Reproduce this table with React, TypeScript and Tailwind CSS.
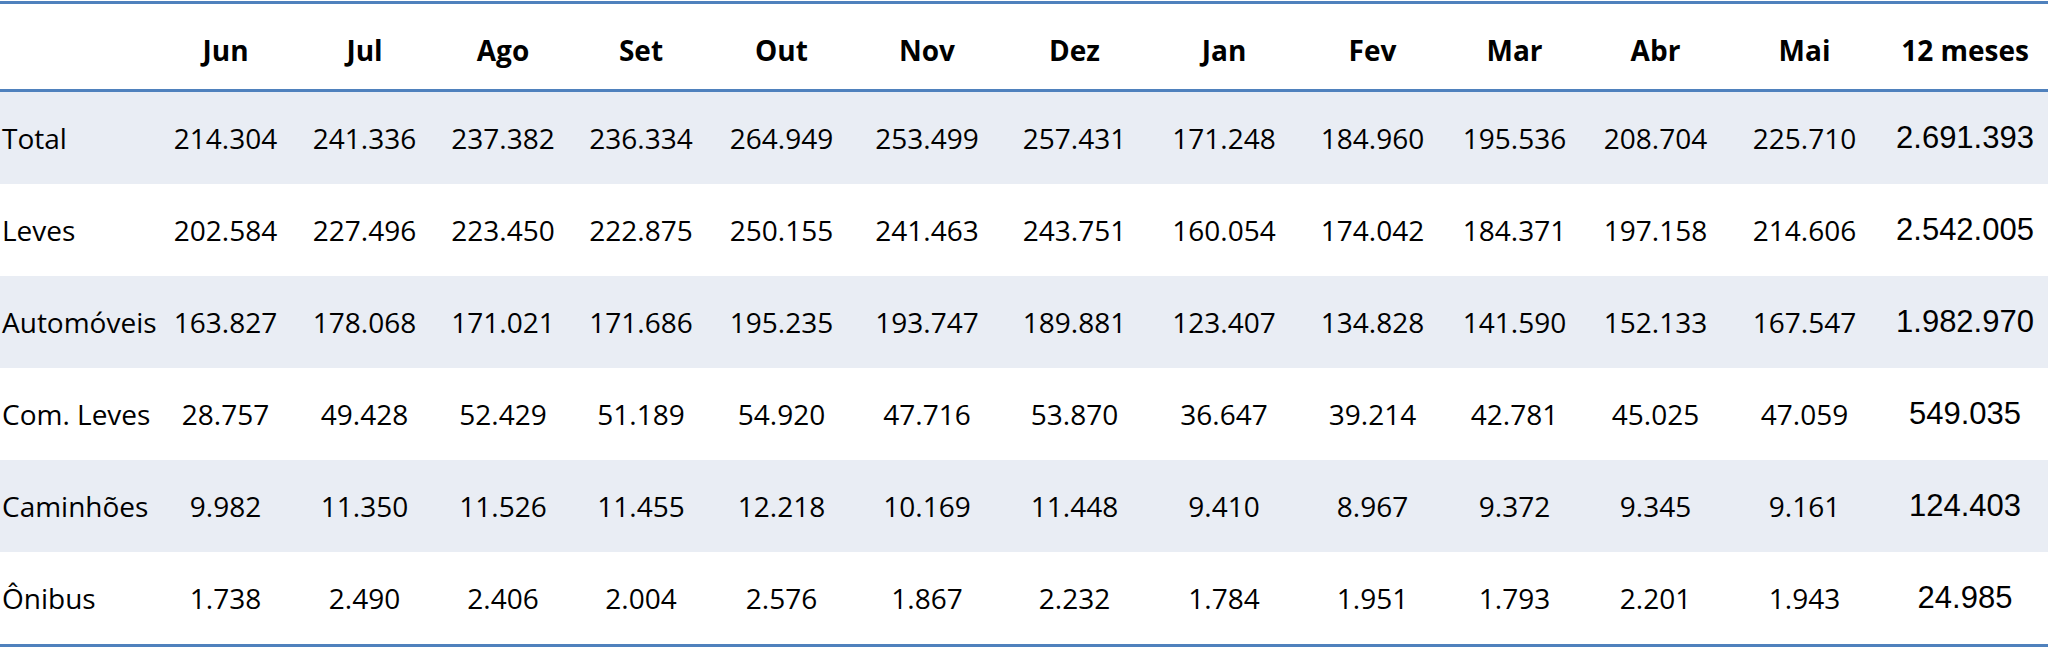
const months = ["Jun", "Jul", "Ago", "Set", "Out", "Nov", "Dez", "Jan", "Fev", "Mar", "Abr", "Mai"]

const rows = [
    { label: "Total", values: ["214.304", "241.336", "237.382", "236.334", "264.949", "253.499", "257.431", "171.248", "184.960", "195.536", "208.704", "225.710"], total: "2.691.393" },
    { label: "Leves", values: ["202.584", "227.496", "223.450", "222.875", "250.155", "241.463", "243.751", "160.054", "174.042", "184.371", "197.158", "214.606"], total: "2.542.005" },
    { label: "Automóveis", values: ["163.827", "178.068", "171.021", "171.686", "195.235", "193.747", "189.881", "123.407", "134.828", "141.590", "152.133", "167.547"], total: "1.982.970" },
    { label: "Com. Leves", values: ["28.757", "49.428", "52.429", "51.189", "54.920", "47.716", "53.870", "36.647", "39.214", "42.781", "45.025", "47.059"], total: "549.035" },
    { label: "Caminhões", values: ["9.982", "11.350", "11.526", "11.455", "12.218", "10.169", "11.448", "9.410", "8.967", "9.372", "9.345", "9.161"], total: "124.403" },
    { label: "Ônibus", values: ["1.738", "2.490", "2.406", "2.004", "2.576", "1.867", "2.232", "1.784", "1.951", "1.793", "2.201", "1.943"], total: "24.985" },
]

const cols =
    "grid grid-cols-[156px_139px_139px_138px_138px_143px_148px_147px_152px_145px_139px_143px_155px_1fr]"

export default function App() {
    return (
        <div className="w-[2048px] h-[652px] bg-white pt-[1px] text-black font-['Open_Sans',sans-serif]">
            <div className="border-y-[3px] border-[#4f81bd]">
                {/* Header */}
                <div className={`${cols} h-[88px] items-center border-b-[3px] border-[#4f81bd] text-[28px] font-bold pt-[6px]`}>
                    <div />
                    {months.map((m) => (
                        <div key={m} className="text-center">
                            {m}
                        </div>
                    ))}
                    <div className="text-center">12 meses</div>
                </div>

                {/* Body */}
                {rows.map((row, i) => (
                    <div
                        key={row.label}
                        className={`${cols} h-[92px] items-center text-[28px] ${i % 2 === 0 ? "bg-[#e9edf4]" : "bg-white"}`}
                    >
                        <div className="pl-[2px] whitespace-nowrap">{row.label}</div>
                        {row.values.map((v, j) => (
                            <div key={j} className="text-center">
                                {v}
                            </div>
                        ))}
                        <div className="text-center text-[31px] font-['Liberation_Sans',Arial,sans-serif]">{row.total}</div>
                    </div>
                ))}
            </div>
        </div>
    )
}
